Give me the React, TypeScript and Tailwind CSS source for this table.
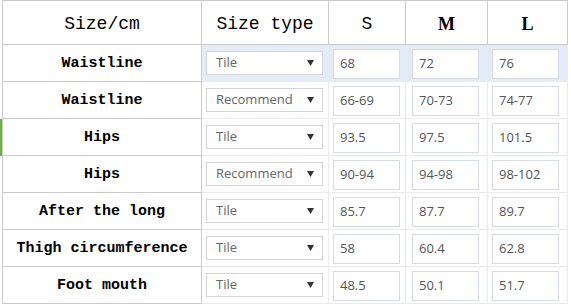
const rows = [
  { label: "Waistline", type: "Tile", s: "68", m: "72", l: "76", active: true },
  { label: "Waistline", type: "Recommend", s: "66-69", m: "70-73", l: "74-77" },
  { label: "Hips", type: "Tile", s: "93.5", m: "97.5", l: "101.5", marked: true },
  { label: "Hips", type: "Recommend", s: "90-94", m: "94-98", l: "98-102" },
  { label: "After the long", type: "Tile", s: "85.7", m: "87.7", l: "89.7" },
  { label: "Thigh circumference", type: "Tile", s: "58", m: "60.4", l: "62.8" },
  { label: "Foot mouth", type: "Tile", s: "48.5", m: "50.1", l: "51.7" },
]

function Select({ value }: { value: string }) {
  return (
    <div className="flex h-[24px] w-[117px] items-center justify-between border border-[#d4d4d4] bg-white pl-[9px] pr-[8px] text-[13px] text-[#666]">
      <span>{value}</span>
      <svg width="7" height="6" viewBox="0 0 7 6">
        <path d="M0 0h7L3.5 6z" fill="#333" />
      </svg>
    </div>
  )
}

function Field({ value }: { value: string }) {
  return (
    <div className="flex h-[30px] w-[67px] items-center border border-[#d6dbe4] bg-white pl-[6px] text-[13px] text-[#555]">
      {value}
    </div>
  )
}

export default function App() {
  return (
    <div className="h-[304px] w-[571px] overflow-hidden bg-white font-['Open_Sans',sans-serif]">
      <div className="flex h-[45px] border-t border-[#cacaca] ml-[2px] w-[566px]">
        <div className="flex w-[200px] items-center justify-center border-x border-b border-[#cacaca] pt-[4px] font-['Liberation_Mono',monospace] text-[18px] text-black">
          Size/cm
        </div>
        <div className="flex w-[127px] items-center justify-center border-r border-b border-[#cacaca] pt-[4px] font-['Liberation_Mono',monospace] text-[18px] text-black">
          Size type
        </div>
        <div className="flex w-[77px] items-center justify-center border-r border-b border-[#cacaca] pt-[4px] font-['Liberation_Mono',monospace] text-[18px] text-black">
          S
        </div>
        <div className="flex w-[82px] items-center justify-center border-r border-b border-[#cacaca] pt-[4px] font-['Liberation_Serif',serif] text-[18px] font-bold text-black">
          M
        </div>
        <div className="flex w-[80px] items-center justify-center border-r border-b border-[#cacaca] pt-[4px] font-['Liberation_Serif',serif] text-[18px] font-bold text-black">
          L
        </div>
      </div>
      {rows.map((r, i) => (
        <div key={i} className="flex h-[37px]">
          <div className={r.marked ? "w-[2px] bg-[#6cb33e]" : "w-[2px]"} />
          <div className="flex w-[200px] items-center justify-center border-x border-b border-[#cacaca] pt-[3px] font-['Liberation_Mono',monospace] text-[15px] font-bold text-black">
            {r.label}
          </div>
          <div className={"flex border-b border-[#ebebeb] " + (r.active ? "bg-[#e3ecf6]" : "bg-white")}>
            <div className="flex w-[127px] items-center pl-[4px] border-r border-[#ebebeb]">
              <Select value={r.type} />
            </div>
            <div className="flex w-[77px] items-center pl-[4px] pt-[1px] border-r border-[#ebebeb]">
              <Field value={r.s} />
            </div>
            <div className="flex w-[82px] items-center pl-[6px] pt-[1px] border-r border-[#ebebeb]">
              <Field value={r.m} />
            </div>
            <div className="flex w-[80px] items-center pl-[4px] pt-[1px] border-r border-[#ebebeb]">
              <Field value={r.l} />
            </div>
          </div>
        </div>
      ))}
    </div>
  )
}
